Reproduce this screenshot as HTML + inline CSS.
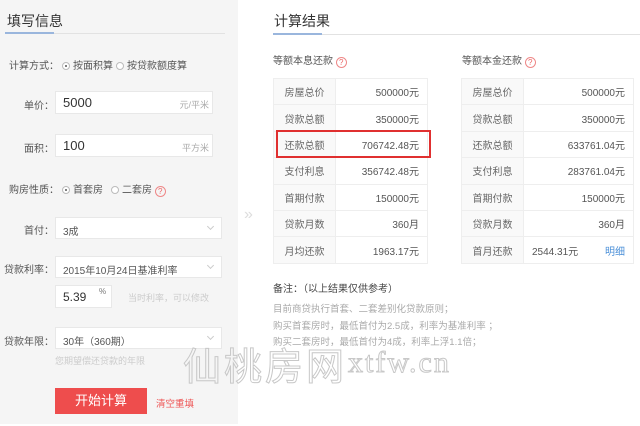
<!DOCTYPE html>
<html><head><meta charset="utf-8"><style>
*{margin:0;padding:0;box-sizing:border-box}
body{width:640px;height:426px;position:relative;background:#fff;font-family:"Liberation Sans","Noto Sans CJK SC",sans-serif;font-size:10px;color:#555;overflow:hidden}
.a{position:absolute;white-space:nowrap}
.left{position:absolute;left:0;top:0;width:238px;height:424px;background:#f5f5f5}
.inp{position:absolute;background:#fff;border:1px solid #e8e8e8}
.lbl{position:absolute;width:54px;text-align:right;color:#555;font-size:10px;white-space:nowrap}
.rad{display:inline-block;width:8px;height:8px;border:1px solid #bbb;border-radius:50%;vertical-align:-1px;margin:0 3px;background:#fff;position:relative}
.rad.on::after{content:"";position:absolute;left:2px;top:2px;width:2px;height:2px;border-radius:50%;background:#555}
.q{display:inline-block;width:11px;height:11px;border:1px solid #e88;border-radius:50%;color:#e66;font-size:8px;line-height:9px;text-align:center;vertical-align:-1px}
.chev{position:absolute;right:8px;top:6px;width:5px;height:5px;border-right:1px solid #ccc;border-bottom:1px solid #ccc;transform:rotate(45deg)}
table{position:absolute;border-collapse:collapse;font-size:10px}
td{border:1px solid #eee;height:26.4px;padding:0 8px}
td.l{background:#f9f9f9;text-align:center;color:#666;width:62px}
td.v{text-align:right;color:#555}
.wm{position:absolute;color:transparent;-webkit-text-stroke:1px #c8c8c8;white-space:nowrap}
</style></head><body>
<div class="left"></div>
<div class="a" style="left:7px;top:11px;font-size:14px;color:#333">填写信息</div>
<div class="a" style="left:5px;top:33px;width:220px;height:1px;background:#e2e2e2"></div>
<div class="a" style="left:5px;top:32px;width:49px;height:2px;background:#9ab6dd"></div>
<div class="a" style="left:9px;top:57px">计算方式：<span class="rad on"></span>按面积算<span class="rad"></span>按贷款额度算</div>
<div class="lbl" style="left:0;top:97px">单价：</div>
<div class="inp" style="left:55px;top:91px;width:158px;height:23px"><span class="a" style="left:7px;top:3px;font-size:13px;color:#333">5000</span><span class="a" style="right:3px;top:6px;color:#aaa;font-size:9px">元/平米</span></div>
<div class="lbl" style="left:0;top:140px">面积：</div>
<div class="inp" style="left:55px;top:134px;width:158px;height:23px"><span class="a" style="left:7px;top:3px;font-size:13px;color:#333">100</span><span class="a" style="right:3px;top:6px;color:#aaa;font-size:9px">平方米</span></div>
<div class="a" style="left:9px;top:181px">购房性质：<span class="rad on"></span>首套房<span class="rad" style="margin-left:8px"></span>二套房 <span class="q">?</span></div>
<div class="lbl" style="left:0;top:222px">首付：</div>
<div class="inp" style="left:55px;top:217px;width:167px;height:22px"><span class="a" style="left:7px;top:5px">3成</span><div class="chev"></div></div>
<div class="lbl" style="left:0;top:261px">贷款利率：</div>
<div class="inp" style="left:55px;top:256px;width:167px;height:22px"><span class="a" style="left:7px;top:5px">2015年10月24日基准利率</span><div class="chev"></div></div>
<div class="inp" style="left:55px;top:285px;width:57px;height:23px"><span class="a" style="left:7px;top:4px;font-size:12px;color:#333">5.39</span><span class="a" style="left:43px;top:1px;font-size:8px;color:#777">%</span></div>
<div class="a" style="left:128px;top:291px;color:#ccc;font-size:9px">当时利率，可以修改</div>
<div class="lbl" style="left:0;top:333px">贷款年限：</div>
<div class="inp" style="left:55px;top:327px;width:167px;height:22px"><span class="a" style="left:7px;top:5px">30年（360期）</span><div class="chev"></div></div>
<div class="a" style="left:55px;top:354px;color:#ccc;font-size:9px">您期望偿还贷款的年限</div>
<div class="a" style="left:55px;top:388px;width:92px;height:26px;background:#ee4d4d;color:#fff;font-size:13px;text-align:center;line-height:26px">开始计算</div>
<div class="a" style="left:156px;top:396px;color:#e55;font-size:9.5px">清空重填</div>
<div class="a" style="left:244px;top:206px;color:#ddd;font-size:16px">»</div>

<div class="a" style="left:274px;top:11px;font-size:14px;color:#333">计算结果</div>
<div class="a" style="left:273px;top:34px;width:367px;height:1px;background:#e2e2e2"></div>
<div class="a" style="left:273px;top:33px;width:49px;height:2px;background:#9ab6dd"></div>
<div class="a" style="left:273px;top:52px;font-size:10px">等额本息还款 <span class="q">?</span></div>
<div class="a" style="left:462px;top:52px;font-size:10px">等额本金还款 <span class="q">?</span></div>
<table style="left:273px;top:78px;width:155px">
<tr><td class="l">房屋总价</td><td class="v">500000元</td></tr>
<tr><td class="l">贷款总额</td><td class="v">350000元</td></tr>
<tr><td class="l">还款总额</td><td class="v">706742.48元</td></tr>
<tr><td class="l">支付利息</td><td class="v">356742.48元</td></tr>
<tr><td class="l">首期付款</td><td class="v">150000元</td></tr>
<tr><td class="l">贷款月数</td><td class="v">360月</td></tr>
<tr><td class="l">月均还款</td><td class="v">1963.17元</td></tr>
</table>
<div class="a" style="left:276px;top:130px;width:155px;height:28px;border:2px solid #e03030"></div>
<table style="left:461px;top:78px;width:173px">
<tr><td class="l">房屋总价</td><td class="v">500000元</td></tr>
<tr><td class="l">贷款总额</td><td class="v">350000元</td></tr>
<tr><td class="l">还款总额</td><td class="v">633761.04元</td></tr>
<tr><td class="l">支付利息</td><td class="v">283761.04元</td></tr>
<tr><td class="l">首期付款</td><td class="v">150000元</td></tr>
<tr><td class="l">贷款月数</td><td class="v">360月</td></tr>
<tr><td class="l">首月还款</td><td class="v"><span style="float:left">2544.31元</span><span style="color:#4a8fd8">明细</span></td></tr>
</table>
<div class="a" style="left:273px;top:280px;font-size:10px;color:#444">备注：（以上结果仅供参考）</div>
<div class="a" style="left:273px;top:302px;color:#aaa;font-size:9.5px;line-height:16.5px">目前商贷执行首套、二套差别化贷款原则；<br>购买首套房时，最低首付为2.5成，利率为基准利率 ；<br>购买二套房时，最低首付为4成，利率上浮1.1倍；</div>
<div class="wm" style="left:183px;top:342px;font-size:38px;letter-spacing:3px;font-family:'Noto Sans CJK SC',sans-serif;line-height:44px">仙桃房网</div>
<div class="wm" style="left:348px;top:345px;font-size:30px;letter-spacing:2px;font-family:'Liberation Serif',serif;line-height:36px">xtfw.cn</div>
</body></html>
